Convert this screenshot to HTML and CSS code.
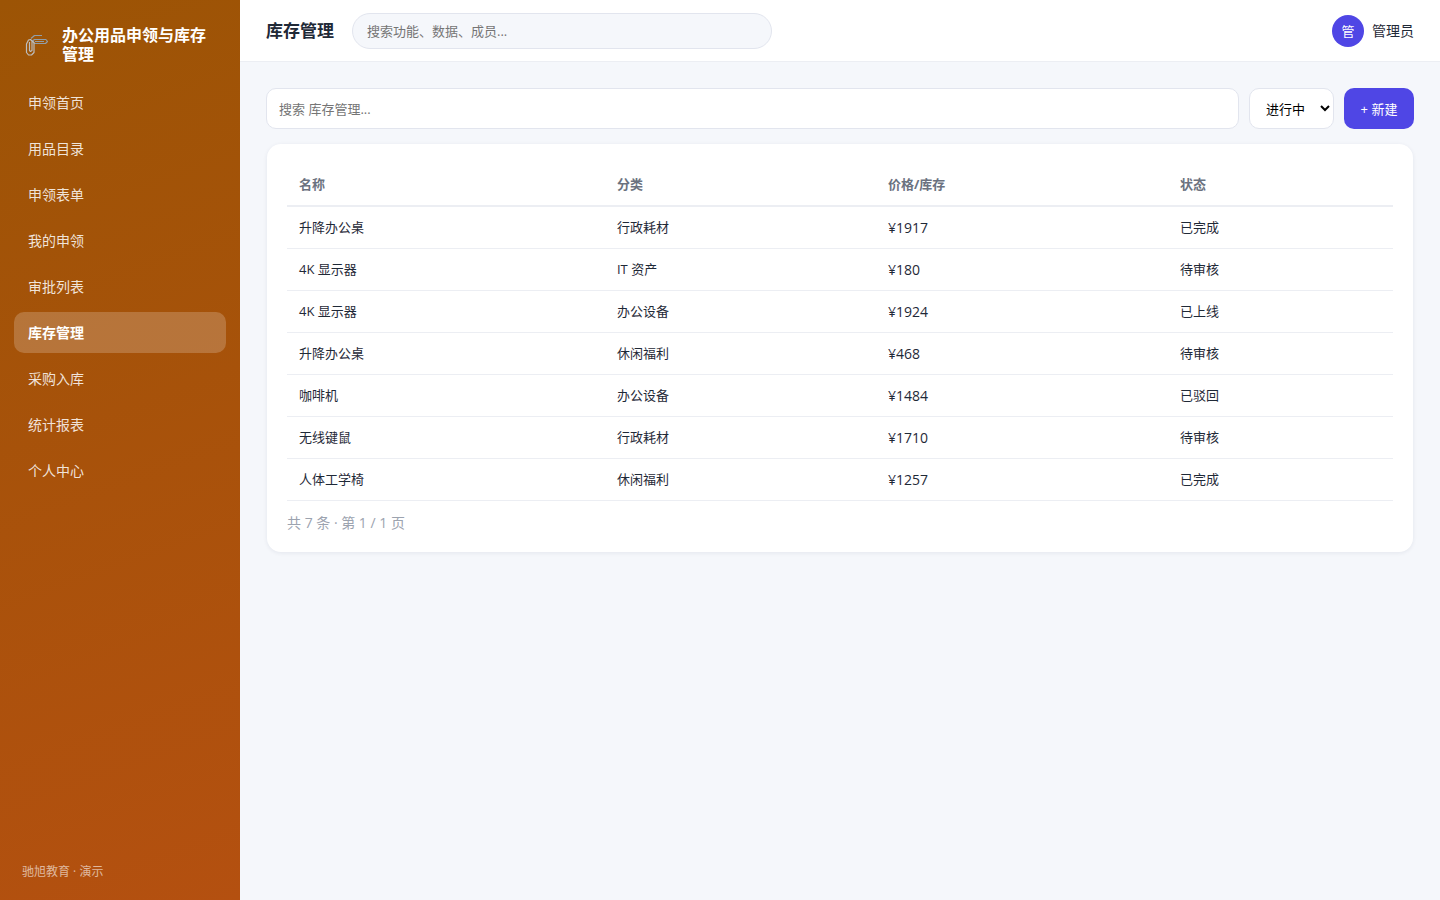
FILE: index.html
```html
<!DOCTYPE html>
<html lang="zh-CN">
<head>
<meta charset="utf-8">
<meta name="viewport" content="width=device-width, initial-scale=1">
<title>库存管理</title>
<link rel="stylesheet" href="styles.css">
</head>
<body>
<div class="app">
  <aside class="sidebar">
    <div class="brand">
      <svg class="brand-icon" viewBox="0 0 24 24" aria-hidden="true">
        <g fill="none" stroke-width="1.2" stroke-linejoin="round">
          <path stroke="#929da6" d="M18 2.500H10.500L7 5.500M22 6.500H10.500L8.500 8L10.500 10.500H21.500L23.500 8.500L22 6.500M11 8.500H20"/>
          <path stroke="#bdbdbd" d="M5.500 9V17.500L6.500 18.500L8 17.500V8L6.500 6.500L4.500 7L2.500 11V19.500L4.500 22H7.500L10 19.500V9.500L7.500 7.500"/>
        </g>
      </svg>
      <span class="brand-name">办公用品申领与库存管理</span>
    </div>
    <nav class="nav" aria-label="主导航">
      <a href="#">申领首页</a>
      <a href="#">用品目录</a>
      <a href="#">申领表单</a>
      <a href="#">我的申领</a>
      <a href="#">审批列表</a>
      <a href="#" class="active" aria-current="page">库存管理</a>
      <a href="#">采购入库</a>
      <a href="#">统计报表</a>
      <a href="#">个人中心</a>
    </nav>
    <div class="sidebar-foot">驰旭教育 · 演示</div>
  </aside>
  <div class="main">
    <header class="topbar">
      <h1>库存管理</h1>
      <input class="global-search" type="search" aria-label="全局搜索" placeholder="搜索功能、数据、成员...">
      <div class="user"><span class="avatar">管</span><span>管理员</span></div>
    </header>
    <main class="content">
      <div class="toolbar">
        <input class="filter" type="search" aria-label="搜索库存管理" placeholder="搜索 库存管理...">
        <select class="status" aria-label="状态"><option>进行中</option></select>
        <button class="create" type="button">+ 新建</button>
      </div>
      <section class="card">
        <table>
          <colgroup><col class="c-name"><col class="c-type"><col class="c-price"><col></colgroup>
          <thead><tr><th>名称</th><th>分类</th><th>价格/库存</th><th>状态</th></tr></thead>
          <tbody>
            <tr><td>升降办公桌</td><td>行政耗材</td><td class="num">¥1917</td><td>已完成</td></tr>
            <tr><td>4K 显示器</td><td>IT 资产</td><td class="num">¥180</td><td>待审核</td></tr>
            <tr><td>4K 显示器</td><td>办公设备</td><td class="num">¥1924</td><td>已上线</td></tr>
            <tr><td>升降办公桌</td><td>休闲福利</td><td class="num">¥468</td><td>待审核</td></tr>
            <tr><td>咖啡机</td><td>办公设备</td><td class="num">¥1484</td><td>已驳回</td></tr>
            <tr><td>无线键鼠</td><td>行政耗材</td><td class="num">¥1710</td><td>待审核</td></tr>
            <tr><td>人体工学椅</td><td>休闲福利</td><td class="num">¥1257</td><td>已完成</td></tr>
          </tbody>
        </table>
        <div class="pager">共 7 条 · 第 1 / 1 页</div>
      </section>
    </main>
  </div>
</div>
</body>
</html>
```
FILE: styles.css
```css
* { box-sizing: border-box; }
body {
  margin: 0;
  background: #f5f7fb;
  color: #1f2937;
  font: 14px/20px "Open Sans", "Noto Sans CJK SC", sans-serif;
}
input, select, button { font: inherit; font-size: 13px; }
.app { display: flex; min-height: 100vh; }

.sidebar {
  display: flex;
  flex-direction: column;
  flex: 0 0 240px;
  padding: 22px 14px 21px;
  color: #fff;
  background: linear-gradient(160deg, #9c5405, #b45010);
}
.brand {
  display: flex;
  align-items: center;
  gap: 14px;
  padding: 4px 10px 18px;
}
.brand-icon { flex: none; width: 24px; height: 24px; }
.brand-name { font-size: 16px; line-height: 19px; font-weight: 700; }
.nav { display: flex; flex-direction: column; gap: 5px; }
.nav a {
  padding: 10px 14px;
  border-radius: 10px;
  line-height: 21px;
  color: rgba(255, 255, 255, .85);
  text-decoration: none;
}
.nav .active {
  background: rgba(255, 255, 255, .2);
  color: #fff;
  font-weight: 700;
}
.sidebar-foot {
  margin-top: auto;
  padding: 0 8px;
  font-size: 12px;
  line-height: 14px;
  color: rgba(255, 255, 255, .6);
}

.main { flex: 1; min-width: 0; }
.topbar {
  display: flex;
  align-items: center;
  gap: 18px;
  height: 62px;
  padding: 0 26px;
  background: #fff;
  border-bottom: 1px solid #eceef3;
}
h1 { margin: 0; font-size: 17px; line-height: 24px; font-weight: 700; }
.global-search {
  flex: 0 1 420px;
  min-width: 0;
  height: 36px;
  padding: 0 14px;
  border: 1px solid #e2e5ee;
  border-radius: 18px;
  background: #f5f7fb;
}
::placeholder { color: #757575; }
.user { display: flex; align-items: center; gap: 8px; margin-left: auto; }
.avatar {
  display: grid;
  place-items: center;
  width: 32px;
  height: 32px;
  border-radius: 50%;
  background: #4f46e5;
  color: #fff;
  font-size: 13px;
}

.content { padding: 26px; }
.toolbar { display: flex; gap: 10px; margin-bottom: 15px; }
.filter, .status {
  height: 41px;
  border: 1px solid #e2e5ee;
  border-radius: 10px;
  background: #fff;
}
.filter { flex: 1; min-width: 0; padding: 0 12px; }
.status { width: 85px; padding: 0 0 0 12px; color: #000; }
.create {
  width: 70px;
  padding: 0;
  border: 0;
  border-radius: 10px;
  background: #4f46e5;
  color: #fff;
}

.card {
  padding: 20px;
  margin: 0 1px;
  border-radius: 14px;
  background: #fff;
  box-shadow: 0 1px 4px rgba(30, 41, 80, .08);
}
table {
  width: 100%;
  table-layout: fixed;
  border-collapse: separate;
  border-spacing: 0;
  font-size: 13px;
}
.c-name { width: 28.75%; }
.c-type { width: 24.5%; }
.c-price { width: 26.4%; }
th, td { padding: 11px 12px; text-align: left; line-height: 19px; }
th { border-bottom: 2px solid #eceef3; color: #6b7280; font-weight: 700; }
td { border-bottom: 1px solid #eceef3; }
.num { font-size: 14px; }
.pager { padding-top: 12px; color: #9ca3af; line-height: 19px; }
```
